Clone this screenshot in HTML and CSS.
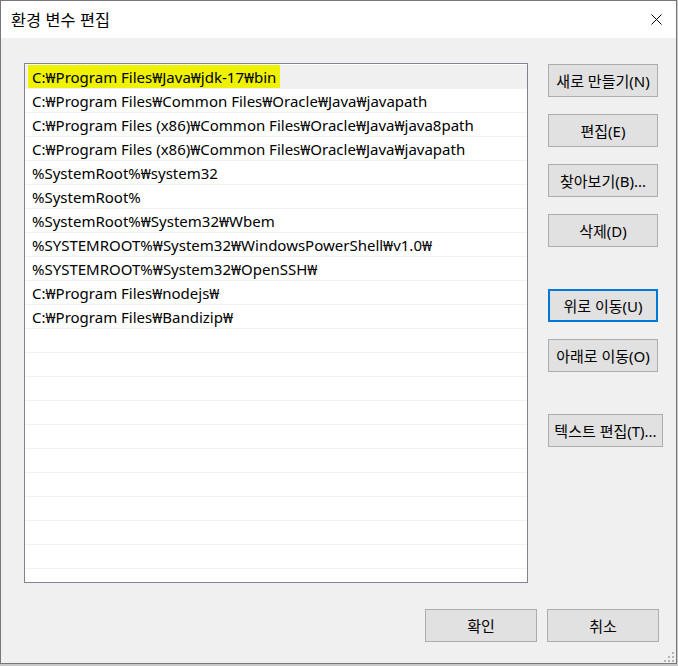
FILE: index.html
```html
<!DOCTYPE html>
<html lang="ko">
<head>
<meta charset="utf-8">
<title>환경 변수 편집</title>
<link rel="stylesheet" href="styles.css">
</head>
<body>
<div class="window">
  <div class="titlebar">
    <span class="title">환경 변수 편집</span>
    <svg class="close" width="11" height="11" viewBox="0 0 11 11"><path d="M0.5 0.5 L10.5 10.5 M10.5 0.5 L0.5 10.5" stroke="#000" stroke-width="1" fill="none"/></svg>
  </div>
  <div class="client">
    <div class="main">
      <div class="list">
        <div class="row selected"><span class="mark">C:₩Program Files₩Java₩jdk-17₩bin</span></div>
        <div class="row"><span class="txt">C:₩Program Files₩Common Files₩Oracle₩Java₩javapath</span></div>
        <div class="row"><span class="txt">C:₩Program Files (x86)₩Common Files₩Oracle₩Java₩java8path</span></div>
        <div class="row"><span class="txt">C:₩Program Files (x86)₩Common Files₩Oracle₩Java₩javapath</span></div>
        <div class="row"><span class="txt">%SystemRoot%₩system32</span></div>
        <div class="row"><span class="txt">%SystemRoot%</span></div>
        <div class="row"><span class="txt">%SystemRoot%₩System32₩Wbem</span></div>
        <div class="row"><span class="txt">%SYSTEMROOT%₩System32₩WindowsPowerShell₩v1.0₩</span></div>
        <div class="row"><span class="txt">%SYSTEMROOT%₩System32₩OpenSSH₩</span></div>
        <div class="row"><span class="txt">C:₩Program Files₩nodejs₩</span></div>
        <div class="row"><span class="txt">C:₩Program Files₩Bandizip₩</span></div>
        <div class="row"></div>
        <div class="row"></div>
        <div class="row"></div>
        <div class="row"></div>
        <div class="row"></div>
        <div class="row"></div>
        <div class="row"></div>
        <div class="row"></div>
        <div class="row"></div>
        <div class="row"></div>
      </div>
      <div class="side">
        <div class="group">
          <button class="btn">새로 만들기(N)</button>
          <button class="btn">편집(E)</button>
          <button class="btn">찾아보기(B)...</button>
          <button class="btn">삭제(D)</button>
        </div>
        <div class="group">
          <button class="btn focus">위로 이동(U)</button>
          <button class="btn">아래로 이동(O)</button>
        </div>
        <div class="group">
          <button class="btn wide">텍스트 편집(T)...</button>
        </div>
      </div>
    </div>
    <div class="footer">
      <button class="btn ok">확인</button>
      <button class="btn ok">취소</button>
    </div>
    <svg class="grip" width="12" height="12" viewBox="0 0 12 12" fill="#b4b4b4">
      <rect x="9" y="1" width="2" height="2"/>
      <rect x="5" y="5" width="2" height="2"/><rect x="9" y="5" width="2" height="2"/>
      <rect x="1" y="9" width="2" height="2"/><rect x="5" y="9" width="2" height="2"/><rect x="9" y="9" width="2" height="2"/>
    </svg>
  </div>
</div>
</body>
</html>
```

FILE: styles.css
```css
* { box-sizing: border-box; }

html, body {
  margin: 0;
  padding: 0;
  background: #c9c9c9;
}

body {
  font-family: "Noto Sans", "Noto Sans CJK KR", sans-serif;
  font-size: 15px;
  color: #000;
}

.window {
  width: 677px;
  height: 664px;
  border: 1px solid #777;
  display: flex;
  flex-direction: column;
  background: #f0f0f0;
}

.titlebar {
  height: 37px;
  flex: none;
  background: #fff;
  display: flex;
  align-items: center;
  justify-content: space-between;
  padding-left: 10px;
  padding-right: 14px;
}

.title {
  font-family: "Noto Sans CJK KR", sans-serif;
  font-size: 16.3px;
  line-height: 1;
  padding-bottom: 1px;
}

.close {
  display: block;
}

.client {
  flex: 1;
  position: relative;
  padding: 25px 17px 0 23px;
  display: flex;
  flex-direction: column;
}

.main {
  display: flex;
  gap: 20px;
}

.list {
  width: 504px;
  height: 520px;
  flex: none;
  background: #fff;
  border: 1px solid #82838c;
  padding-top: 1px;
  overflow: hidden;
}

.row {
  height: 24px;
  border-bottom: 1px solid #f0f0f0;
  display: flex;
  align-items: stretch;
  white-space: nowrap;
  line-height: 24px;
}

.row.selected {
  background: #f0f0f0;
}

.txt {
  padding-left: 7px;
}

.mark {
  background: #eef200;
  padding: 0 4px;
  margin-left: 3px;
}

.side {
  display: flex;
  flex-direction: column;
  gap: 42px;
  padding-top: 1px;
}

.group {
  display: flex;
  flex-direction: column;
  gap: 17px;
  align-items: flex-start;
}

.btn {
  font-family: "Noto Sans", "Noto Sans CJK KR", sans-serif;
  font-size: 15px;
  color: #000;
  width: 110px;
  height: 33px;
  background: #e1e1e1;
  border: 1px solid #adadad;
  border-radius: 0;
  padding: 0 1px 1px;
  margin: 0;
  white-space: nowrap;
  display: flex;
  align-items: center;
  justify-content: center;
}

.btn.focus {
  border: 2px solid #0078d7;
}

.btn.wide {
  width: 115px;
}

.footer {
  margin-top: 26px;
  display: flex;
  justify-content: flex-end;
  gap: 10px;
}

.btn.ok {
  width: 112px;
}

.grip {
  position: absolute;
  right: 1px;
  bottom: 0;
}
```
